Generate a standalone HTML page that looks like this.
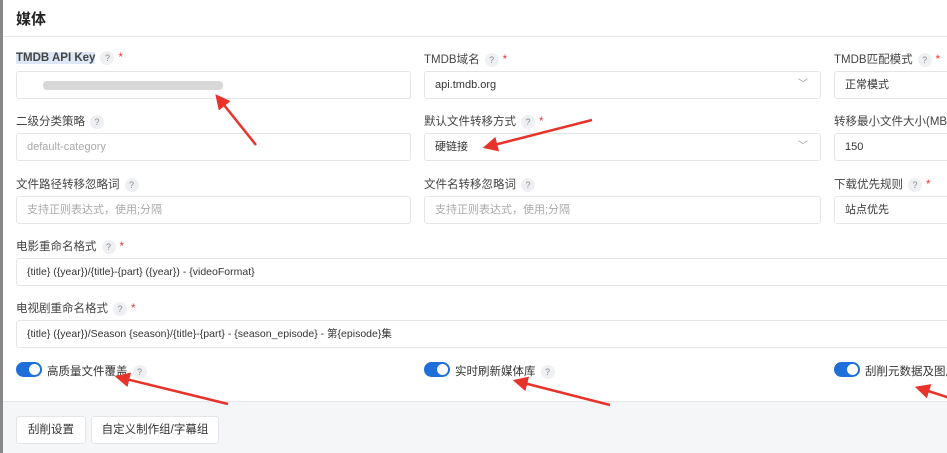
<!DOCTYPE html>
<html><head><meta charset="utf-8"><style>
*{box-sizing:border-box;margin:0;padding:0}
body{width:947px;height:453px;overflow:hidden;background:#fff;font-family:"Liberation Sans","Noto Sans CJK SC",sans-serif;color:#333;position:relative}
.lb{position:absolute;left:0;top:0;width:3px;height:453px;background:#888}
.h{position:absolute;left:16px;top:8px;font-size:15px;font-weight:bold;color:#222}
.hr{position:absolute;left:3px;right:0;top:36px;border-top:1px solid #e6e8eb}
.lab{position:absolute;font-size:11.5px;color:#444;white-space:nowrap}
.q{display:inline-block;width:14px;height:14px;border-radius:7px;background:#eef0f3;color:#888;font-size:9px;text-align:center;line-height:14px;margin-left:5px}
.s{color:#e53935;margin-left:4px}
.in{position:absolute;height:28px;border:1px solid #e3e5e8;border-radius:3px;font-size:11px;line-height:26px;padding-left:10px;color:#333;white-space:nowrap;overflow:hidden}
.ph{color:#aaa}
.ch{position:absolute;right:12px;top:0;color:#999;font-size:10px}
.tg{position:absolute;top:362px;width:26px;height:15px;border-radius:8px;background:#1e6fd9}
.tg:after{content:"";position:absolute;right:2px;top:2px;width:11px;height:11px;border-radius:6px;background:#fff}
.tl{position:absolute;top:363px;font-size:11.5px;color:#333;white-space:nowrap}
.ft{position:absolute;left:3px;right:0;top:401px;bottom:0;background:#f5f6f8;border-top:1px solid #e6e8eb}
.bt{position:absolute;top:416px;height:28px;background:#fff;border:1px solid #e3e5e8;border-radius:3px;font-size:11.5px;line-height:26px;text-align:center}
</style></head><body>
<div class="lb"></div>
<div class="h">媒体</div><div class="hr"></div>

<div class="lab" style="left:16px;top:51px"><span style="background:#dde7f5;font-weight:bold">TMDB API Key</span><span class="q">?</span><span class="s">*</span></div>
<div class="lab" style="left:424px;top:51px">TMDB域名<span class="q">?</span><span class="s">*</span></div>
<div class="lab" style="left:834px;top:51px">TMDB匹配模式<span class="q">?</span><span class="s">*</span></div>
<div class="in" style="left:16px;top:71px;width:395px"><span style="display:inline-block;width:180px;height:9px;margin-left:16px;background:#d8d8d8;border-radius:4px;vertical-align:middle"></span></div>
<div class="in" style="left:424px;top:71px;width:397px">api.tmdb.org<span class="ch">﹀</span></div>
<div class="in" style="left:834px;top:71px;width:130px">正常模式</div>

<div class="lab" style="left:16px;top:113px">二级分类策略<span class="q">?</span></div>
<div class="lab" style="left:424px;top:113px">默认文件转移方式<span class="q">?</span><span class="s">*</span></div>
<div class="lab" style="left:834px;top:113px">转移最小文件大小(MB)</div>
<div class="in ph" style="left:16px;top:133px;width:395px">default-category</div>
<div class="in" style="left:424px;top:133px;width:397px">硬链接<span class="ch">﹀</span></div>
<div class="in" style="left:834px;top:133px;width:130px">150</div>

<div class="lab" style="left:16px;top:176px">文件路径转移忽略词<span class="q">?</span></div>
<div class="lab" style="left:424px;top:176px">文件名转移忽略词<span class="q">?</span></div>
<div class="lab" style="left:834px;top:176px">下载优先规则<span class="q">?</span><span class="s">*</span></div>
<div class="in ph" style="left:16px;top:196px;width:395px">支持正则表达式，使用;分隔</div>
<div class="in ph" style="left:424px;top:196px;width:397px">支持正则表达式，使用;分隔</div>
<div class="in" style="left:834px;top:196px;width:130px">站点优先</div>

<div class="lab" style="left:16px;top:238px">电影重命名格式<span class="q">?</span><span class="s">*</span></div>
<div class="in" style="left:16px;top:258px;width:960px;font-size:10.5px">{title} ({year})/{title}-{part} ({year}) - {videoFormat}</div>
<div class="lab" style="left:16px;top:300px">电视剧重命名格式<span class="q">?</span><span class="s">*</span></div>
<div class="in" style="left:16px;top:320px;width:960px;font-size:10.5px">{title} ({year})/Season {season}/{title}-{part} - {season_episode} - 第{episode}集</div>

<div class="tg" style="left:16px"></div><div class="tl" style="left:47px">高质量文件覆盖<span class="q">?</span></div>
<div class="tg" style="left:424px"></div><div class="tl" style="left:455px">实时刷新媒体库<span class="q">?</span></div>
<div class="tg" style="left:834px"></div><div class="tl" style="left:865px">刮削元数据及图片</div>

<div class="ft"></div>
<div class="bt" style="left:16px;width:70px">刮削设置</div>
<div class="bt" style="left:91px;width:128px">自定义制作组/字幕组</div>

<svg style="position:absolute;left:0;top:0" width="947" height="453">
<defs><marker id="a" markerWidth="6" markerHeight="6" refX="3" refY="3" orient="auto"><path d="M0,0L6,3L0,6z" fill="#e8332a"/></marker></defs>
<g stroke="#e8332a" stroke-width="2.5" marker-end="url(#a)" fill="none">
<line x1="256" y1="145" x2="220" y2="100"/>
<line x1="592" y1="120" x2="490" y2="146"/>
<line x1="228" y1="404" x2="122" y2="378"/>
<line x1="610" y1="405" x2="520" y2="382"/>
<line x1="950" y1="398" x2="922" y2="389"/>
</g></svg>
</body></html>
